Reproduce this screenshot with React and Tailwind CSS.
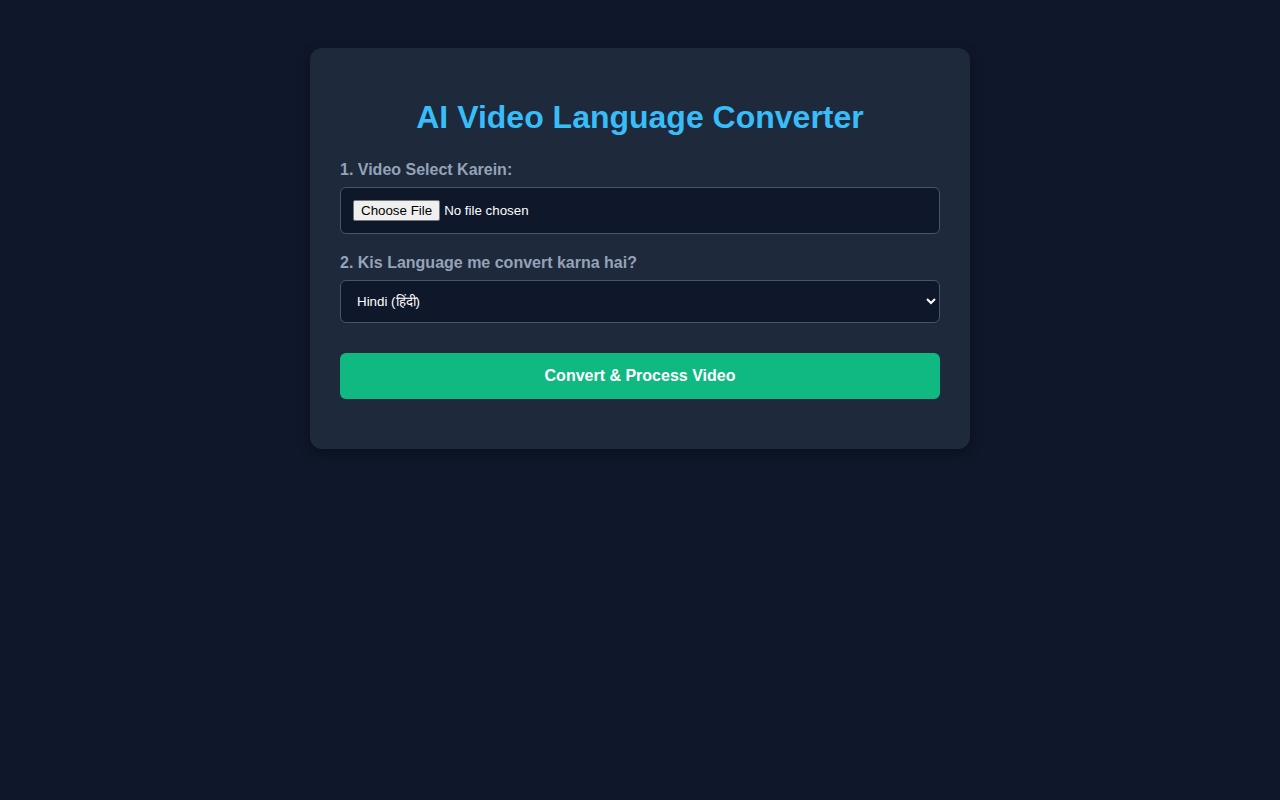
import { useState } from "react";

const App = () => {
  const [language, setLanguage] = useState("hi");

  return (
    <div className="min-h-screen bg-[#0f172a] pt-12 font-['Liberation_Sans',Arial,sans-serif] text-white">
      {/* Card */}
      <div className="mx-auto w-[660px] rounded-xl bg-[#1e293b] p-[30px] shadow-[0_4px_12px_rgba(0,0,0,0.35)]">
        <h1 className="mt-[21px] mb-[25px] text-center text-[32px] font-bold leading-[37px] text-[#38bdf8]">
          AI Video Language Converter
        </h1>

        {/* Video upload */}
        <div className="mb-5">
          <label
            htmlFor="video"
            className="mb-2 block text-base font-bold leading-[18px] text-[#94a3b8]"
          >
            1. Video Select Karein:
          </label>
          <input
            id="video"
            type="file"
            accept="video/*"
            className="block w-full rounded-md border border-[#475569] bg-[#0f172a] p-3 text-[13.33px] leading-[21px] text-white file:mr-1 file:rounded-[2px] file:border file:border-[#767676] file:bg-[#efefef] file:px-[7px] file:py-0 file:text-[13.33px] file:leading-[19px] file:text-black"
          />
        </div>

        {/* Language */}
        <div>
          <label
            htmlFor="language"
            className="mb-2 block text-base font-bold leading-[18px] text-[#94a3b8]"
          >
            2. Kis Language me convert karna hai?
          </label>
          <select
            id="language"
            value={language}
            onChange={(e) => setLanguage(e.target.value)}
            className="block h-[43px] w-full rounded-md border border-[#475569] bg-[#0f172a] px-3 text-[13.33px] text-white"
          >
            <option value="hi">Hindi (हिंदी)</option>
            <option value="en">English</option>
            <option value="ur">Urdu (اردو)</option>
            <option value="bn">Bengali (বাংলা)</option>
          </select>
        </div>

        {/* Submit */}
        <button
          type="button"
          className="mt-[30px] mb-5 block h-[46px] w-full rounded-md bg-[#10b981] text-base font-bold text-white"
        >
          Convert &amp; Process Video
        </button>
      </div>
    </div>
  );
};

export default App;
